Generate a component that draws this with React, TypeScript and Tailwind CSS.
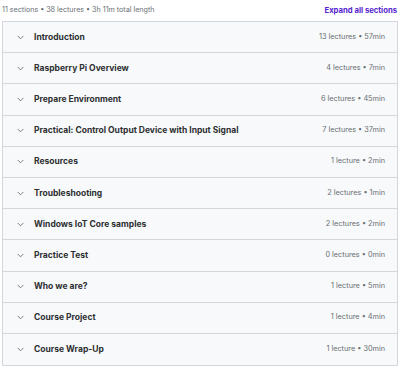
import React from "react";

const sections: [string, string][] = [
  ["Introduction", "13 lectures • 57min"],
  ["Raspberry Pi Overview", "4 lectures • 7min"],
  ["Prepare Environment", "6 lectures • 45min"],
  ["Practical: Control Output Device with Input Signal", "7 lectures • 37min"],
  ["Resources", "1 lecture • 2min"],
  ["Troubleshooting", "2 lectures • 1min"],
  ["Windows IoT Core samples", "2 lectures • 2min"],
  ["Practice Test", "0 lectures • 0min"],
  ["Who we are?", "1 lecture • 5min"],
  ["Course Project", "1 lecture • 4min"],
  ["Course Wrap-Up", "1 lecture • 30min"],
];

function Chevron() {
  return (
    <svg width="7" height="5" viewBox="0 0 8 5" fill="none" className="shrink-0">
      <path d="M1 1l3 3 3-3" stroke="#6a6f73" strokeWidth="1" strokeLinecap="round" strokeLinejoin="round" />
    </svg>
  );
}

export default function App() {
  return (
    <div className="w-[400px] h-[368px] bg-white text-[#2d2f31]" style={{ fontFamily: "Inter, 'Noto Sans', sans-serif" }}>
      <div className="flex items-center justify-between pl-[2px] pr-[3px] h-[21px]">
        <span className="text-[7.15px] text-[#6a6f73]">11 sections • 38 lectures • 3h 11m total length</span>
        <span className="text-[7.7px] font-bold text-[#5624d0]">Expand all sections</span>
      </div>
      <div className="mx-[2px] border border-[#d1d7dc]">
        {sections.map(([title, meta], i) => (
          <div
            key={i}
            className={`flex items-center h-[31.2px] bg-[#f7f9fa] pl-[14px] pr-[12px] ${i < sections.length - 1 ? "border-b border-[#d1d7dc]" : ""}`}
          >
            <Chevron />
            <span className="ml-[10px] text-[8.5px] font-bold flex-1">{title}</span>
            <span className="text-[7.3px] text-[#6a6f73]">{meta}</span>
          </div>
        ))}
      </div>
    </div>
  );
}
